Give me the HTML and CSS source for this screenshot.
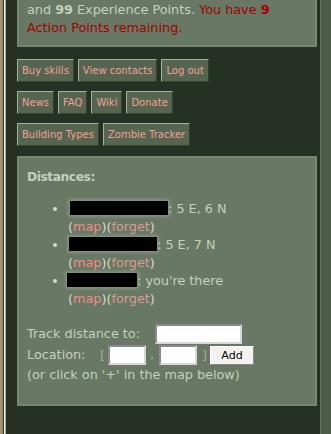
FILE: index.html
```html
<!DOCTYPE html>
<html>
<head>
<meta charset="utf-8">
<link rel="stylesheet" href="styles.css">
</head>
<body>
<div class="frame-edge"></div>
<div class="main">
  <div class="panel panel-top">
    <div class="msg">and <b>99</b> Experience Points. <span class="ap">You have <b>9</b> Action Points remaining.</span></div>
  </div>

  <div class="btnrow">
    <a class="btn">Buy skills</a>
    <a class="btn">View contacts</a>
    <a class="btn">Log out</a>
  </div>
  <div class="btnrow">
    <a class="btn">News</a>
    <a class="btn">FAQ</a>
    <a class="btn">Wiki</a>
    <a class="btn">Donate</a>
  </div>
  <div class="btnrow">
    <a class="btn">Building Types</a>
    <a class="btn">Zombie Tracker</a>
  </div>

  <div class="panel panel-bottom">
    <div class="heading">Distances:</div>
    <ul class="dist">
      <li><span class="redact r1"></span>: 5 E, 6 N<br><span class="par">(</span><a class="lk-map">map</a><span class="par">)(</span><a class="lk-forget">forget</a><span class="par">)</span></li>
      <li><span class="redact r2"></span>: 5 E, 7 N<br><span class="par">(</span><a class="lk-map">map</a><span class="par">)(</span><a class="lk-forget">forget</a><span class="par">)</span></li>
      <li><span class="redact r3"></span>: you're there<br><span class="par">(</span><a class="lk-map">map</a><span class="par">)(</span><a class="lk-forget">forget</a><span class="par">)</span></li>
    </ul>
    <div class="track">
      <div class="trow"><span class="tlabel">Track distance to:</span><span class="field wide"></span></div>
      <div class="trow"><span class="llabel">Location:</span><span class="brk open">[</span><span class="field small"></span><span class="brk comma">,</span><span class="field small"></span><span class="brk close">]</span><button class="add">Add</button></div>
      <div class="hint">(or click on '+' in the map below)</div>
    </div>
  </div>
</div>
<div class="frame-right"></div>
</body>
</html>
```
FILE: styles.css
```css
html, body {
  margin: 0;
  padding: 0;
  height: 100%;
}
body {
  background: #243123;
  display: flex;
  font-family: "DejaVu Sans", sans-serif;
  overflow: hidden;
}
.frame-edge {
  width: 6px;
  flex: none;
  background: linear-gradient(to right, #9c9c92 0, #9c9c92 1px, #b08a48 1px, #b08a48 2px, #8a8a80 2px, #8a8a80 3px, #3a3a30 3px, #3a3a30 4px, #f4f4ee 4px, #f4f4ee 5px, #a8aca0 5px, #a8aca0 6px);
}
.main {
  flex: 1;
  padding: 0 3px 0 11px;
}
.frame-right {
  width: 10px;
  flex: none;
  background: #4c5c48;
  border-left: 1px solid #62735d;
}
.panel {
  background: #687864;
  border: 2px solid #778870;
  color: #c5d0bd;
}
.panel-top {
  border-top: none;
  padding: 1px 8px 8px 8px;
  font-size: 12.8px;
  line-height: 18px;
}
.ap {
  color: #a30000;
}
.btnrow {
  display: flex;
  gap: 4px;
  margin-top: 12px;
}
.btnrow + .btnrow {
  margin-top: 9px;
}
.btn {
  display: block;
  height: 21px;
  line-height: 21px;
  padding: 0 4px;
  font-size: 10px;
  color: #f3a09a;
  background: #55654f;
  border: 1px solid;
  border-color: #a5b29e #33432f #33432f #a5b29e;
}
.panel-bottom {
  margin-top: 10px;
  height: 226px;
  padding: 10px 8px;
  font-size: 12.8px;
  line-height: 18px;
}
.heading {
  font-weight: bold;
  font-size: 12.2px;
  letter-spacing: -0.4px;
}
.dist {
  margin: 14px 0 0 0;
  padding-left: 41px;
  list-style: disc;
}
.dist li::marker {
  color: #d0dbc8;
}
.redact {
  display: inline-block;
  height: 14px;
  vertical-align: -2px;
  background: #000;
  box-shadow: 0 0 3px 2px rgba(190, 200, 180, 0.35);
}
.r1 { width: 98px; margin-left: 2px; }
.r2 { width: 88px; margin-left: 1px; }
.r3 { width: 70px; margin-left: -1px; }
.par { color: #d3dcc9; }
.lk-map { color: #f58a86; }
.lk-forget { color: #d99d92; }
.track {
  margin-top: 16px;
}
.trow {
  display: flex;
  align-items: center;
  height: 20px;
}
.trow + .trow {
  margin-top: 1px;
}
.tlabel {
  width: 128px;
}
.llabel {
  width: 73px;
}
.brk {
  color: #9eab97;
}
.open {
  width: 8px;
}
.comma {
  width: 13px;
  box-sizing: border-box;
  padding-left: 4px;
}
.close {
  width: 13px;
  box-sizing: border-box;
  padding-left: 5px;
}
.field {
  display: block;
  box-sizing: border-box;
  height: 20px;
  background: #fff;
  border: 2px solid;
  border-color: #8a8a8a #d8d8d8 #d8d8d8 #8a8a8a;
}
.wide { width: 87px; }
.small { width: 38px; }
.add {
  width: 44px;
  height: 19px;
  padding: 0;
  font-family: "DejaVu Sans", sans-serif;
  font-size: 11px;
  color: #000;
  background: #f2f2ef;
  border: 1px solid;
  border-color: #ffffff #888 #888 #ffffff;
}
.hint {
  margin-top: 1px;
}
```
